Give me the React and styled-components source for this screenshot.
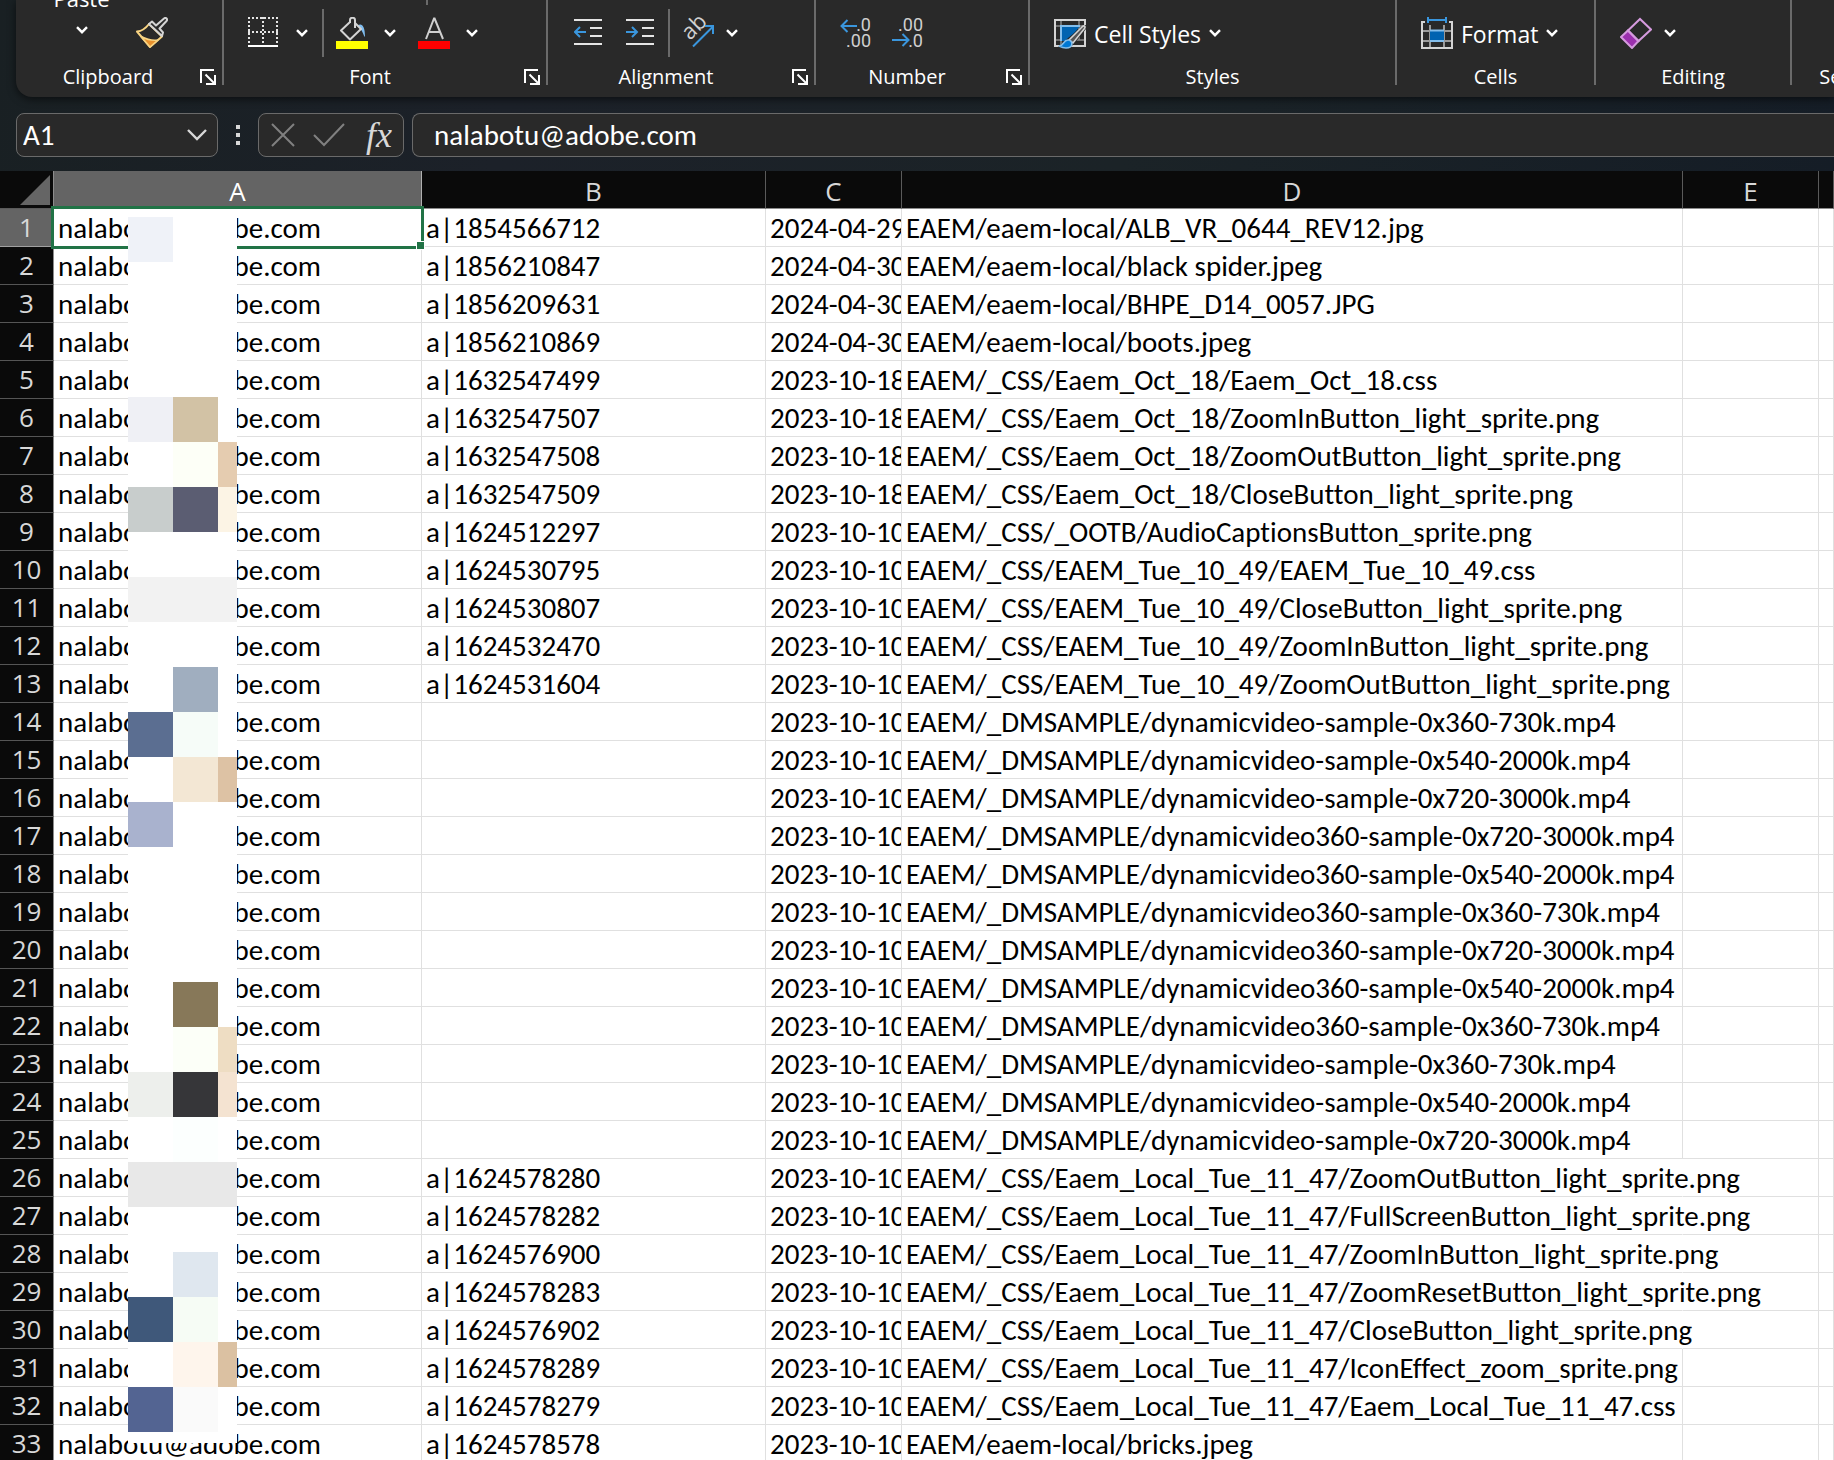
import React from "react";
import styled, { createGlobalStyle } from "styled-components";

const UI_FONT = `"Segoe UI", "Open Sans", "Noto Sans", sans-serif`;
const CELL_FONT = `Calibri, Carlito, Lato, sans-serif`;

const GlobalStyle = createGlobalStyle`
  *, *::before, *::after { box-sizing: border-box; }
  body { margin: 0; background: #1a2024; }
  button, input { font: inherit; color: inherit; margin: 0; padding: 0; border: 0; background: none; }
  svg { display: block; flex: none; }
`;

const Workbook = styled.div`
  display: flex;
  flex-direction: column;
  height: 100vh;
  overflow: hidden;
  background: linear-gradient(100deg, #192023 0%, #1c2129 25%, #1b2327 55%, #131b26 100%);
  color: #fff;
  font-family: ${UI_FONT};
`;

/* ---------- ribbon ---------- */

const Ribbon = styled.header`
  display: flex;
  flex: none;
  margin-left: 16px;
  overflow: hidden;
  background: #292929;
  border-bottom-left-radius: 16px;
  box-shadow: 0 2px 8px rgba(0, 0, 0, 0.6);
`;

const Group = styled.section`
  display: flex;
  flex-direction: column;
  flex: none;
  width: ${(p) => p.$width}px;
  padding-bottom: 6px;
`;

const Tools = styled.div`
  display: flex;
  align-items: center;
  gap: ${(p) => p.$gap || 0}px;
  height: 48px;
  margin-bottom: 6px;
  padding-left: ${(p) => p.$indent || 24}px;
`;

const UpperRow = styled.div`
  display: flex;
  justify-content: ${(p) => (p.$center ? "center" : "flex-start")};
  align-items: flex-end;
  height: 9px;
  padding: 0 0 4px ${(p) => p.$indent || 0}px;
`;

const GroupFooter = styled.div`
  display: flex;
  align-items: center;
  height: 28px;
  padding-left: ${(p) => p.$indent || 0}px;
`;

const GroupName = styled.h2`
  flex: 1;
  margin: 0;
  font-size: 20px;
  font-weight: 400;
  line-height: 28px;
  text-align: center;
`;

const Launcher = styled.button`
  display: flex;
  justify-content: flex-end;
  width: 30px;
  padding-right: 6px;
`;

const Separator = styled.div`
  flex: none;
  align-self: flex-start;
  width: 2px;
  height: 85px;
  background: #6a6a6a;
`;

const ToolSeparator = styled.div`
  flex: none;
  width: 2px;
  height: ${(p) => p.$height || 48}px;
  margin: ${(p) => p.$margin || "0"};
  background: #6a6a6a;
`;

const Split = styled.div`
  display: flex;
  align-items: center;
`;

const Tool = styled.button`
  display: flex;
  align-items: center;
  gap: 8px;
  height: 48px;
  font-size: 23px;
  line-height: 30px;
  white-space: nowrap;
`;

const ToolLabel = styled.span`
  padding-top: 2px;
`;

const Arrow = styled.button`
  display: flex;
  align-items: center;
  justify-content: center;
  width: ${(p) => p.$width || 44}px;
  height: 48px;
`;

const ClipboardTools = styled.div`
  display: flex;
  height: 63px;
  padding-left: 36px;
  gap: 25px;
`;

const Paste = styled.button`
  display: flex;
  flex-direction: column;
  align-items: center;
  width: 59px;
  height: 62px;
  margin-top: -17px;
  gap: 13px;
  font-size: 22px;
  line-height: 30px;
`;

const PainterTool = styled(Tool)`
  margin-top: 9px;
`;

const Disabled = styled.span`
  color: #666;
  font-size: 23px;
  line-height: 30px;
`;

/* ---------- formula bar ---------- */

const FormulaBar = styled.div`
  display: flex;
  flex: none;
  padding: 16px 0 14px 16px;
`;

const Box = styled.div`
  display: flex;
  align-items: center;
  height: 44px;
  border: 1px solid #6a6a6a;
  border-radius: 8px;
  background: #292929;
`;

const NameBox = styled(Box)`
  width: 202px;
  padding: 0 10px 0 6px;
`;

const FunctionBox = styled(Box)`
  width: 146px;
  padding: 0 8px 0 12px;
  justify-content: space-between;
`;

const FormulaField = styled(Box)`
  flex: 1;
  margin-left: 8px;
  padding-left: 21px;
  border-right: 0;
  border-radius: 8px 0 0 8px;
`;

const TextInput = styled.input`
  flex: 1;
  min-width: 0;
  height: 40px;
  outline: 0;
  font-family: ${CELL_FONT};
  font-size: 29px;
  font-variant-ligatures: none;
`;

const IconButton = styled.button`
  display: flex;
  align-items: center;
`;

const FxButton = styled.button`
  width: 32px;
  color: #d8d8d8;
  font-family: "Liberation Serif", serif;
  font-size: 36px;
  font-style: italic;
  line-height: 40px;
`;

const Grip = styled.div`
  display: flex;
  flex-direction: column;
  align-items: center;
  justify-content: center;
  gap: 4px;
  width: 40px;
`;

const GripDot = styled.i`
  width: 4px;
  height: 4px;
  background: #d8d8d8;
`;

/* ---------- sheet ---------- */

const Sheet = styled.main`
  position: relative;
  flex: none;
  background: #fff;
`;

const Grid = styled.table`
  width: 100%;
  table-layout: fixed;
  border-collapse: separate;
  border-spacing: 0;
`;

const Col = styled.col`
  width: ${(p) => (p.$width ? p.$width + "px" : "auto")};
`;

const Corner = styled.td`
  height: 38px;
  padding: 0 3px 0 0;
  border-right: 1px solid #8c8c8c;
  border-bottom: 1px solid #5a5a5a;
  background: #0a0a0a;

  svg { margin-left: auto; }
`;

const ColumnHead = styled.th`
  height: 38px;
  padding: 3px 0 0;
  border-right: 1px solid ${(p) => (p.$active ? "#b0b0b0" : "#5a5a5a")};
  border-bottom: 1px solid #8c8c8c;
  background: ${(p) => (p.$active ? "#646464" : "#0a0a0a")};
  color: ${(p) => (p.$active ? "#fff" : "#d8d8d8")};
  font-size: 26px;
  font-weight: 400;
  line-height: 34px;
`;

const RowHead = styled.th`
  height: 38px;
  padding: 1px 0 0;
  border-right: 1px solid #8c8c8c;
  border-bottom: 1px solid ${(p) => (p.$active ? "#a0a0a0" : "#555")};
  background: ${(p) => (p.$active ? "#646464" : "#0a0a0a")};
  color: #d8d8d8;
  font-size: 26px;
  font-weight: 400;
  line-height: 34px;
  vertical-align: top;
`;

const Cell = styled.td`
  position: ${(p) => (p.$anchor ? "relative" : "static")};
  height: 38px;
  padding: 2px 0 0 4px;
  overflow: ${(p) => (p.$clip ? "hidden" : "visible")};
  border-right: 1px solid ${(p) => (p.$open ? "transparent" : "#e0e0e0")};
  border-bottom: 1px solid #e0e0e0;
  color: #000;
  font-family: ${CELL_FONT};
  font-size: 29px;
  font-variant-ligatures: none;
  line-height: 35px;
  white-space: nowrap;
`;

const Selection = styled.div`
  position: absolute;
  inset: -3px;
  border: 3px solid #217346;
  pointer-events: none;

  &::after {
    content: "";
    position: absolute;
    right: -4px;
    bottom: -4px;
    width: 9px;
    height: 9px;
    border: 1px solid #fff;
    background: #217346;
  }
`;

const Mosaic = styled.div`
  position: absolute;
  top: 46px;
  left: 128px;
  display: grid;
  grid-template-columns: 45px 45px 19px;
  grid-auto-rows: 45px;
  height: 1226px;
  overflow: hidden;
`;

const Tile = styled.i`
  background: ${(p) => p.$color};
`;

/* ---------- icons ---------- */

const Chevron = () => (
  <svg width="12" height="8" viewBox="0 0 12 8" fill="none" stroke="#fff" strokeWidth="2.4">
    <path d="M1 1.2 6 6.2 11 1.2" />
  </svg>
);

const LauncherIcon = () => (
  <svg width="16" height="16" viewBox="0 0 16 16" fill="none" stroke="#fff" strokeWidth="2">
    <path d="M14 1H1v13M15 6v9H6M5.5 5.5 14 14" />
  </svg>
);

const PainterIcon = () => (
  <svg width="32" height="32" viewBox="0 0 32 32" fill="none" strokeLinejoin="round">
    <path d="M13 7C10 11 6 14 1 14.500L14 30 26 19.500Z" fill="#292929" stroke="#f7d382" strokeWidth="2" />
    <path d="M5 19.500C11 22.500 16 24 22 23L14 30Z" fill="#e8912d" stroke="#f7d382" strokeWidth="1.500" />
    <path d="m13 7 3-2.500 4 4L28 1.500c2-1.500 4 .8 2.500 2.500L23.500 11.500l3.500 4-1 3.500z" fill="#292929" stroke="#d4d4d4" strokeWidth="2" />
  </svg>
);

const BorderIcon = () => (
  <svg width="32" height="32" viewBox="0 0 32 32" fill="none" stroke="#e4e4e4" strokeWidth="2">
    <path d="M0 1h30M0 15h30" strokeDasharray="2 2" />
    <path d="M1 0v28M15 0v28M29 0v28" strokeDasharray="2 2" />
    <path d="M0 29h30" stroke="#fff" />
  </svg>
);

const FillIcon = () => (
  <svg width="32" height="32" viewBox="0 0 32 32" fill="none" strokeLinejoin="round">
    <path d="M22 8c4-2 7 1 7 12-2-2-2-6-5-8z" fill="#7fbdf0" />
    <path d="M14 5 5 13.500 14 22.500 25 12 19 6M19 11V3c0-3-5-3-5 0v3" stroke="#d4d4d4" strokeWidth="2" />
    <path d="M0 24h32v8H0z" fill="#ff0" />
  </svg>
);

const FontColorIcon = () => (
  <svg width="32" height="32" viewBox="0 0 32 32" fill="none">
    <path d="M8 22 16 1.500h.6L25 22M11 15h11" stroke="#d0d0d0" strokeWidth="2" />
    <path d="M0 24h32v8H0z" fill="#f00" />
  </svg>
);

const IndentIcon = ({ increase }) => (
  <svg width="32" height="32" viewBox="0 0 32 32" fill="none" strokeWidth="2">
    <path d="M0 3h28M16 11h12M16 19h12M0 27h28" stroke="#e4e4e4" />
    <path d={increase ? "M0 15h11M6 10l5 5-5 5" : "M12 15H1M6 10l-5 5 5 5"} stroke="#3a96dd" />
  </svg>
);

const OrientationIcon = () => (
  <svg width="32" height="32" viewBox="0 0 32 32" fill="none" strokeWidth="2">
    <text x="8" y="24" transform="rotate(-45 8 24)" fill="#d0d0d0" fontSize="22" fontFamily="Open Sans, sans-serif">ab</text>
    <path d="M11 29.500 31 9.500M23 9h8v8" stroke="#3a96dd" />
  </svg>
);

const DecimalIcon = ({ increase }) => (
  <svg width="32" height="32" viewBox="0 0 32 32" fill="none" strokeWidth="2">
    <g fill="#d0d0d0" fontSize="18" fontFamily="Roboto, sans-serif" textAnchor="end">
      <text x="31" y="14">{increase ? ".0" : ".00"}</text>
      <text x="31" y="30">{increase ? ".00" : ".0"}</text>
    </g>
    <path d={increase ? "M17 9H1M7.500 3 1.500 9l6 6" : "M0 23h17M10.500 17l6 6-6 6"} stroke="#3a96dd" />
  </svg>
);

const CellStylesIcon = () => (
  <svg width="32" height="32" viewBox="0 0 32 32" fill="none">
    <path d="M7 3v26M25 3v20M1 9h30M1 23h30" stroke="#8a8a8a" strokeWidth="1.500" />
    <path d="M6 9h20L14 24H7z" fill="#0063b1" />
    <path d="M6 9h20M7 9v15" stroke="#83beec" strokeWidth="2" />
    <path d="M1 3h30v26H1z" stroke="#d4d4d4" strokeWidth="2" />
    <path d="M2 32 14 21 30 8h2v4L20 27l-6 5z" fill="#292929" />
    <path d="M15 23 28 10c2-2 4-1 2.500 1.500L19 26z" fill="#555" stroke="#d4d4d4" strokeWidth="1.600" />
    <path d="M5 29c5 0 4-6 9-6 5 0 6 8-2 8-3 0-5-1-7-2z" fill="#0078d4" stroke="#83beec" strokeWidth="1.600" />
  </svg>
);

const FormatIcon = () => (
  <svg width="32" height="32" viewBox="0 0 32 32" fill="none" strokeWidth="2">
    <path d="M9 8v23M23 8v23M1 14h30M1 24h30" stroke="#9a9a9a" />
    <path d="M9 14h14v10H9z" fill="#0063b1" />
    <path d="M9 13.500h14M9 24h14" stroke="#83beec" />
    <path d="M4 5H1v26h30V5h-3" stroke="#d4d4d4" />
    <path d="M7 0v6M25 0v6M7 3h18" stroke="#3a96dd" />
  </svg>
);

const EraserIcon = () => (
  <svg width="32" height="32" viewBox="0 0 32 32" strokeWidth="2">
    <path d="M1 20 8 13.500 18.500 24 12 31z" fill="#9b2fae" stroke="#d59ade" />
    <path d="M8 13.500 20 2 31 12.500 18.500 24z" fill="none" stroke="#d59ade" />
  </svg>
);

const DropIcon = () => (
  <svg width="20" height="12" viewBox="0 0 20 12" fill="none" stroke="#d8d8d8" strokeWidth="2.400">
    <path d="M1 1 10 10 19 1" />
  </svg>
);

const CancelIcon = () => (
  <svg width="24" height="24" viewBox="0 0 24 24" fill="none" stroke="#808080" strokeWidth="2">
    <path d="m1 1 22 22M23 1 1 23" />
  </svg>
);

const EnterIcon = () => (
  <svg width="32" height="24" viewBox="0 0 32 24" fill="none" stroke="#808080" strokeWidth="2">
    <path d="M1 12 11 22 31 1" />
  </svg>
);

const CornerIcon = () => (
  <svg width="30" height="30" viewBox="0 0 30 30">
    <path d="M30 0v30H0z" fill="#656565" />
  </svg>
);

/* ---------- data ---------- */

const USER = "nalabotu@adobe.com";
const CSS = "EAEM/_CSS/";
const DM = "EAEM/_DMSAMPLE/dynamicvideo";
const LOCAL = CSS + "Eaem_Local_Tue_11_47/";

// asset id, date, path, whether the path runs on into the next column
const rows = [
  ["a|1854566712", "2024-04-29", "EAEM/eaem-local/ALB_VR_0644_REV12.jpg"],
  ["a|1856210847", "2024-04-30", "EAEM/eaem-local/black spider.jpeg"],
  ["a|1856209631", "2024-04-30", "EAEM/eaem-local/BHPE_D14_0057.JPG"],
  ["a|1856210869", "2024-04-30", "EAEM/eaem-local/boots.jpeg"],
  ["a|1632547499", "2023-10-18", CSS + "Eaem_Oct_18/Eaem_Oct_18.css"],
  ["a|1632547507", "2023-10-18", CSS + "Eaem_Oct_18/ZoomInButton_light_sprite.png"],
  ["a|1632547508", "2023-10-18", CSS + "Eaem_Oct_18/ZoomOutButton_light_sprite.png"],
  ["a|1632547509", "2023-10-18", CSS + "Eaem_Oct_18/CloseButton_light_sprite.png"],
  ["a|1624512297", "2023-10-10", CSS + "_OOTB/AudioCaptionsButton_sprite.png"],
  ["a|1624530795", "2023-10-10", CSS + "EAEM_Tue_10_49/EAEM_Tue_10_49.css"],
  ["a|1624530807", "2023-10-10", CSS + "EAEM_Tue_10_49/CloseButton_light_sprite.png"],
  ["a|1624532470", "2023-10-10", CSS + "EAEM_Tue_10_49/ZoomInButton_light_sprite.png"],
  ["a|1624531604", "2023-10-10", CSS + "EAEM_Tue_10_49/ZoomOutButton_light_sprite.png"],
  ["", "2023-10-10", DM + "-sample-0x360-730k.mp4"],
  ["", "2023-10-10", DM + "-sample-0x540-2000k.mp4"],
  ["", "2023-10-10", DM + "-sample-0x720-3000k.mp4"],
  ["", "2023-10-10", DM + "360-sample-0x720-3000k.mp4"],
  ["", "2023-10-10", DM + "360-sample-0x540-2000k.mp4"],
  ["", "2023-10-10", DM + "360-sample-0x360-730k.mp4"],
  ["", "2023-10-10", DM + "360-sample-0x720-3000k.mp4"],
  ["", "2023-10-10", DM + "360-sample-0x540-2000k.mp4"],
  ["", "2023-10-10", DM + "360-sample-0x360-730k.mp4"],
  ["", "2023-10-10", DM + "-sample-0x360-730k.mp4"],
  ["", "2023-10-10", DM + "-sample-0x540-2000k.mp4"],
  ["", "2023-10-10", DM + "-sample-0x720-3000k.mp4"],
  ["a|1624578280", "2023-10-10", LOCAL + "ZoomOutButton_light_sprite.png", true],
  ["a|1624578282", "2023-10-10", LOCAL + "FullScreenButton_light_sprite.png", true],
  ["a|1624576900", "2023-10-10", LOCAL + "ZoomInButton_light_sprite.png", true],
  ["a|1624578283", "2023-10-10", LOCAL + "ZoomResetButton_light_sprite.png", true],
  ["a|1624576902", "2023-10-10", LOCAL + "CloseButton_light_sprite.png", true],
  ["a|1624578289", "2023-10-10", LOCAL + "IconEffect_zoom_sprite.png"],
  ["a|1624578279", "2023-10-10", LOCAL + "Eaem_Local_Tue_11_47.css"],
  ["a|1624578578", "2023-10-10", "EAEM/eaem-local/bricks.jpeg"],
];

const W = "#ffffff";
const tiles = {
  0: ["#eff2f8", W, W],
  4: ["#eff0f5", "#d2c2a5", W],
  5: [W, "#fdfff7", "#e5ccb0"],
  6: ["#c8cdcc", "#5b5d72", "#fcf4e5"],
  8: ["#f2f2f2", "#f2f2f2", "#f2f2f2"],
  10: [W, "#a0aebf", W],
  11: ["#5b6e91", "#f6fcf8", W],
  12: [W, "#f3e7d4", "#ddc2a4"],
  13: ["#a9b2ce", W, W],
  17: [W, "#877859", W],
  18: [W, "#fcfff8", "#eeddc3"],
  19: ["#edefec", "#363639", "#f4e3d1"],
  20: [W, "#fcfffe", W],
  21: ["#e8e8e8", "#e8e8e8", "#e8e8e8"],
  23: [W, "#dfe7ef", W],
  24: ["#3f587a", "#f6fcf5", W],
  25: [W, "#fef5ec", "#dbc1a2"],
  26: ["#536492", "#fafafa", W],
};
const mosaicColors = Array.from({ length: 28 }, (_, i) => tiles[i] || [W, W, W]).flat();

/* ---------- pieces ---------- */

const Footer = ({ name, launcher, indent }) => (
  <GroupFooter $indent={indent}>
    <GroupName>{name}</GroupName>
    {launcher && (
      <Launcher aria-label={name + " settings"}>
        <LauncherIcon />
      </Launcher>
    )}
  </GroupFooter>
);

const SplitTool = ({ label, icon, arrowWidth }) => (
  <Split>
    <Tool aria-label={label}>{icon}</Tool>
    <Arrow aria-label={label + " options"} $width={arrowWidth}>
      <Chevron />
    </Arrow>
  </Split>
);

function RibbonBar() {
  return (
    <Ribbon>
      <Group $width={206}>
        <ClipboardTools>
          <Paste>
            Paste
            <Chevron />
          </Paste>
          <PainterTool aria-label="Format Painter">
            <PainterIcon />
          </PainterTool>
        </ClipboardTools>
        <Footer name="Clipboard" launcher indent={8} />
      </Group>
      <Separator />
      <Group $width={322}>
        <UpperRow $indent={202}>
          <ToolSeparator $height={5} />
        </UpperRow>
        <Tools $gap={6}>
          <SplitTool label="Borders" icon={<BorderIcon />} />
          <ToolSeparator $margin="0 6px 0 -8px" />
          <SplitTool label="Fill Color" icon={<FillIcon />} />
          <SplitTool label="Font Color" icon={<FontColorIcon />} />
        </Tools>
        <Footer name="Font" launcher />
      </Group>
      <Separator />
      <Group $width={266}>
        <UpperRow />
        <Tools $gap={20} $indent={26}>
          <Tool aria-label="Decrease Indent"><IndentIcon /></Tool>
          <Tool aria-label="Increase Indent"><IndentIcon increase /></Tool>
          <ToolSeparator $margin="0 -8px 0 -10px" />
          <SplitTool label="Orientation" icon={<OrientationIcon />} arrowWidth={36} />
        </Tools>
        <Footer name="Alignment" launcher />
      </Group>
      <Separator />
      <Group $width={212}>
        <UpperRow />
        <Tools $gap={20}>
          <Tool aria-label="Increase Decimal"><DecimalIcon increase /></Tool>
          <Tool aria-label="Decrease Decimal"><DecimalIcon /></Tool>
        </Tools>
        <Footer name="Number" launcher />
      </Group>
      <Separator />
      <Group $width={365}>
        <UpperRow />
        <Tools>
          <Tool><CellStylesIcon /><ToolLabel>Cell Styles</ToolLabel><Chevron /></Tool>
        </Tools>
        <Footer name="Styles" />
      </Group>
      <Separator />
      <Group $width={197}>
        <UpperRow />
        <Tools>
          <Tool><FormatIcon /><ToolLabel>Format</ToolLabel><Chevron /></Tool>
        </Tools>
        <Footer name="Cells" />
      </Group>
      <Separator />
      <Group $width={194}>
        <UpperRow />
        <Tools>
          <SplitTool label="Clear" icon={<EraserIcon />} arrowWidth={36} />
        </Tools>
        <Footer name="Editing" />
      </Group>
      <Separator />
      <Group $width={148}>
        <UpperRow $center>
          <Disabled>Sensitivity</Disabled>
        </UpperRow>
        <Tools />
        <Footer name="Sensitivity" />
      </Group>
    </Ribbon>
  );
}

export default function App() {
  return (
    <Workbook>
      <GlobalStyle />
      <RibbonBar />
      <FormulaBar>
        <NameBox>
          <TextInput aria-label="Name Box" defaultValue="A1" />
          <IconButton aria-label="Open Name Box"><DropIcon /></IconButton>
        </NameBox>
        <Grip>
          <GripDot />
          <GripDot />
          <GripDot />
        </Grip>
        <FunctionBox>
          <IconButton aria-label="Cancel"><CancelIcon /></IconButton>
          <IconButton aria-label="Enter"><EnterIcon /></IconButton>
          <FxButton aria-label="Insert Function">fx</FxButton>
        </FunctionBox>
        <FormulaField>
          <TextInput aria-label="Formula Bar" defaultValue={USER} />
        </FormulaField>
      </FormulaBar>
      <Sheet>
        <Grid>
          <colgroup>
            <Col $width={54} />
            <Col $width={368} />
            <Col $width={344} />
            <Col $width={136} />
            <Col $width={781} />
            <Col $width={136} />
            <Col />
          </colgroup>
          <thead>
            <tr>
              <Corner><CornerIcon /></Corner>
              {["A", "B", "C", "D", "E", ""].map((name) => (
                <ColumnHead key={name} scope="col" $active={name === "A"}>{name}</ColumnHead>
              ))}
            </tr>
          </thead>
          <tbody>
            {rows.map(([id, date, path, open], i) => (
              <tr key={i}>
                <RowHead scope="row" $active={i === 0}>{i + 1}</RowHead>
                <Cell $anchor={i === 0}>
                  {USER}
                  {i === 0 && <Selection />}
                </Cell>
                <Cell>{id}</Cell>
                <Cell $clip>{date}</Cell>
                <Cell $open={open}>{path}</Cell>
                <Cell />
                <Cell />
              </tr>
            ))}
          </tbody>
        </Grid>
        <Mosaic aria-hidden="true">
          {mosaicColors.map((color, i) => (
            <Tile key={i} $color={color} />
          ))}
        </Mosaic>
      </Sheet>
    </Workbook>
  );
}
